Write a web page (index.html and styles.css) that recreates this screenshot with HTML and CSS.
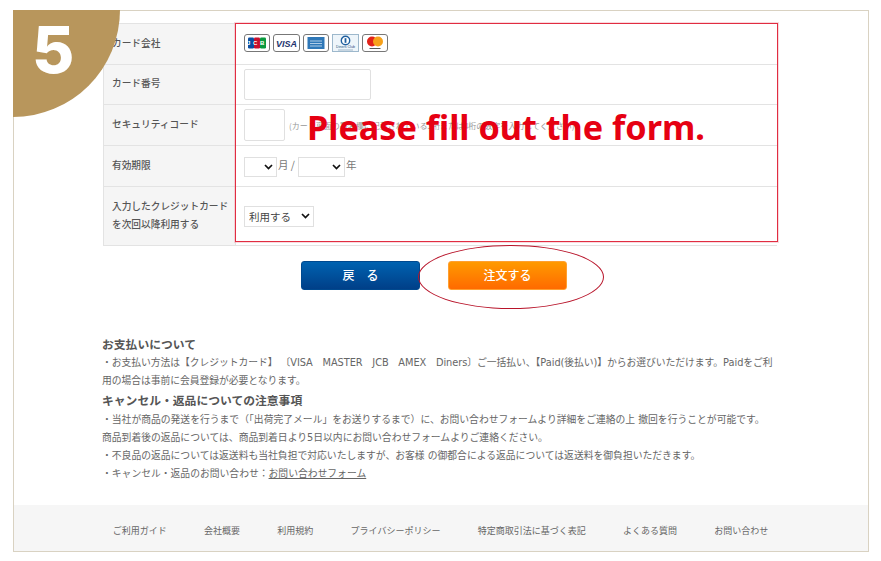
FILE: index.html
```html
<!DOCTYPE html>
<html lang="ja">
<head>
<meta charset="utf-8">
<title>お支払い</title>
<link rel="stylesheet" href="styles.css">
</head>
<body>
<div class="frame">
  <main class="main">
    <table class="form">
      <tr class="r1">
        <th>カード会社</th>
        <td>
          <div class="cards">
            <svg class="card" viewBox="0 0 26 18"><rect x=".5" y=".5" width="25" height="17" rx="2.5" fill="#fff" stroke="#777"/><rect x="4" y="3.5" width="6" height="11" rx="1.2" fill="#0b4ea2"/><rect x="10" y="3.5" width="6" height="11" rx="1.2" fill="#c8102e"/><rect x="16" y="3.5" width="6" height="11" rx="1.2" fill="#0a9a3e"/><text x="13" y="11" class="jcb" text-anchor="middle">JCB</text></svg>
            <svg class="card wide" viewBox="0 0 27 18"><rect x=".5" y=".5" width="26" height="17" rx="2.5" fill="#fff" stroke="#777"/><text x="13.5" y="12.5" class="visa" text-anchor="middle">VISA</text></svg>
            <svg class="card" viewBox="0 0 26 18"><rect x=".5" y=".5" width="25" height="17" rx="2.5" fill="#fff" stroke="#777"/><rect x="4.5" y="3" width="17" height="12" fill="#2f78b8"/><path d="M7 7h12M7 9.5h12M7 12h12" stroke="#cfe2f2" stroke-width=".8"/></svg>
            <svg class="card wide" viewBox="0 0 27 18"><rect x=".5" y=".5" width="26" height="17" fill="#eef5fa" stroke="#9db8cc"/><circle cx="13.5" cy="6.5" r="4.2" fill="#fff" stroke="#1f5f9e" stroke-width="1.4"/><rect x="12.6" y="4.2" width="1.8" height="4.6" fill="#1f5f9e"/><text x="13.5" y="14" class="diners" text-anchor="middle">Diners Club</text><path d="M6 16h15" stroke="#8aa6bc" stroke-width=".8"/></svg>
            <svg class="card" viewBox="0 0 26 18"><rect x=".5" y=".5" width="25" height="17" rx="2.5" fill="#fff" stroke="#777"/><circle cx="10" cy="7.5" r="5" fill="#e2231a"/><circle cx="16" cy="7.5" r="5" fill="#f7a11a"/><path d="M7.5 14.5h11" stroke="#444" stroke-width=".9"/></svg>
          </div>
        </td>
      </tr>
      <tr class="r2">
        <th>カード番号</th>
        <td><input class="num" type="text" aria-label="カード番号"></td>
      </tr>
      <tr class="r3">
        <th>セキュリティコード</th>
        <td>
          <div class="sec">
            <input class="cvc" type="text" aria-label="セキュリティコード">
            <span class="hint">(カード裏面の署名欄に記載されている3桁または4桁の数字を入力してください)</span>
          </div>
        </td>
      </tr>
      <tr class="r4">
        <th>有効期限</th>
        <td>
          <div class="exp">
            <select class="month" aria-label="月"><option></option></select>
            <span class="unit">月 /</span>
            <select class="year" aria-label="年"><option></option></select>
            <span class="unit">年</span>
          </div>
        </td>
      </tr>
      <tr class="r5">
        <th>入力したクレジットカード<br>を次回以降利用する</th>
        <td><select class="use" aria-label="利用"><option>利用する</option></select></td>
      </tr>
    </table>

    <div class="buttons">
      <a class="btn back">戻　る</a>
      <a class="btn order">注文する</a>
    </div>

    <section class="notes">
      <h2>お支払いについて</h2>
      <p class="tight">・お支払い方法は【クレジットカード】&nbsp;〔VISA　MASTER　JCB　AMEX　Diners〕ご一括払い、【Paid(後払い)】からお選びいただけます。Paidをご利用の場合は事前に会員登録が必要となります。</p>
      <h2>キャンセル・返品についての注意事項</h2>
      <p>・当社が商品の発送を行うまで（「出荷完了メール」をお送りするまで）に、お問い合わせフォームより詳細をご連絡の上 撤回を行うことが可能です。<br>商品到着後の返品については、商品到着日より5日以内にお問い合わせフォームよりご連絡ください。<br>・不良品の返品については返送料も当社負担で対応いたしますが、お客様 の御都合による返品については返送料を御負担いただきます。<br>・キャンセル・返品のお問い合わせ：<a class="link">お問い合わせフォーム</a></p>
    </section>
  </main>

  <footer class="foot">
    <a>ご利用ガイド</a><a>会社概要</a><a>利用規約</a><a>プライバシーポリシー</a><a>特定商取引法に基づく表記</a><a>よくある質問</a><a>お問い合わせ</a>
  </footer>

  <div class="step">5</div>
  <div class="redbox"></div>
  <div class="please">Please fill out the form.</div>
  <div class="oval"></div>
</div>
</body>
</html>
```
FILE: styles.css
```css
* { box-sizing: border-box; }
html, body { margin: 0; padding: 0; background: #fff; }
body {
  font-family: "Noto Sans CJK JP", "Noto Sans", sans-serif;
  color: #555;
  font-size: 9.6px;
}
.frame {
  position: relative;
  width: 856px;
  height: 542px;
  margin: 10px 0 0 13px;
  border: 1px solid #d9d2c2;
  display: flex;
  flex-direction: column;
}
.main { flex: 1; padding: 12px 0 0 89px; }

.form {
  width: 674px;
  border-collapse: collapse;
  table-layout: fixed;
}
.form th, .form td { border: 1px solid #e3e3e3; padding: 0; vertical-align: middle; }
.form th {
  width: 132px;
  background: #f5f5f5;
  text-align: left;
  padding: 0 0 3px 8px;
  font-weight: 500;
  font-size: 9.7px;
  line-height: 18px;
  color: #555;
}
.form td { padding-left: 8px; border-left: 0; border-right: 0; }
.r1 { height: 41px; }
.r2 { height: 40px; }
.r3 { height: 41px; }
.r4 { height: 41px; }
.r5 { height: 59px; }

.cards { display: flex; gap: 3px; align-items: center; margin-top: -2px; }
.card { width: 26px; height: 18px; display: block; }
.card.wide { width: 27px; }
.visa { font: italic 700 9px "Liberation Sans", sans-serif; fill: #23346e; }
.jcb { font: 700 6px "Liberation Sans", sans-serif; fill: #fff; letter-spacing: 2.6px; }
.diners { font: 3.6px "Liberation Sans", sans-serif; fill: #1f4f7e; }

input {
  border: 1px solid #e0e0e0;
  background: #fff;
  border-radius: 2px;
  display: block;
  margin: 0;
}
select {
  appearance: none;
  -webkit-appearance: none;
  display: block;
  margin: 0;
  border: 1px solid #e0e0e0;
  border-radius: 0;
  padding: 0 0 0 4px;
  font-family: inherit;
  background-color: #fff;
  background-image: url("data:image/svg+xml,%3Csvg xmlns='http://www.w3.org/2000/svg' width='9' height='6'%3E%3Cpath d='M1 1l3.5 3.5L8 1' fill='none' stroke='%23111' stroke-width='1.7'/%3E%3C/svg%3E");
  background-repeat: no-repeat;
  background-position: right 3px center;
}
.num { width: 127px; height: 31px; }
.cvc { width: 41px; height: 32px; }
.sec { display: flex; align-items: center; gap: 4px; }
.hint { font-size: 8px; color: #999; white-space: nowrap; }
.exp { display: flex; align-items: center; gap: 1px; font-size: 10.5px; color: #777; }
.unit { padding-bottom: 3px; }
.month { width: 33px; height: 20px; margin-top: 1px; }
.year { width: 47px; height: 20px; margin: 1px 0 0 2px; }
.use { width: 70px; height: 21px; font-size: 10.5px; color: #444; }

.buttons { display: flex; justify-content: flex-start; gap: 28px; margin: 15px 0 0 198px; }
.btn {
  width: 119px;
  height: 29px;
  padding-bottom: 2px;
  border-radius: 3px;
  color: #fff;
  font-size: 12px;
  font-weight: 500;
  display: flex;
  align-items: center;
  justify-content: center;
}
.back { background: linear-gradient(#0062b0, #003f88); border: 1px solid #00498f; }
.order { background: linear-gradient(#ff9a00, #ff6a00); border: 1px solid #ffa030; }

.notes { width: 680px; margin: 45px 0 0 -1px; }
.notes h2 { margin: 0; font-size: 11.8px; line-height: 18px; font-weight: 700; color: #555; }
.notes h2:nth-of-type(2) { margin-bottom: 2px; }
.notes p {
  margin: 1px 0;
  line-height: 18px;
  font-family: "DejaVu Sans", "Noto Sans CJK JP", sans-serif;
  font-size: 9.8px;
  color: #666;
}
.notes .tight { letter-spacing: -0.05px; }
.link { text-decoration: underline; }

.foot {
  height: 46px;
  padding: 4px 1px 0 0;
  background: #f6f6f6;
  display: flex;
  justify-content: center;
  align-items: center;
  gap: 37.3px;
  font-size: 9px;
  color: #666;
}

.step {
  position: absolute;
  left: -1px;
  top: -1px;
  width: 107px;
  height: 107px;
  background: #b8965c;
  border-bottom-right-radius: 107px;
  color: #fff;
  font: 800 65px/1 "Inter", sans-serif;
  padding: 7px 0 0 19px;
}
.redbox {
  position: absolute;
  left: 221px;
  top: 12px;
  width: 543px;
  height: 219px;
  border: 1px solid rgb(225, 45, 65);
  box-shadow: 0 0 0 1px rgba(235, 130, 145, 0.3);
}
.please {
  position: absolute;
  left: 293px;
  top: 95px;
  font: 700 34.2px/1.2 "Noto Sans", sans-serif;
  color: #e60012;
  white-space: nowrap;
}
.oval {
  position: absolute;
  left: 404px;
  top: 234px;
  width: 186px;
  height: 64px;
  border: 1px solid #b8142a;
  border-radius: 50%;
}
```
